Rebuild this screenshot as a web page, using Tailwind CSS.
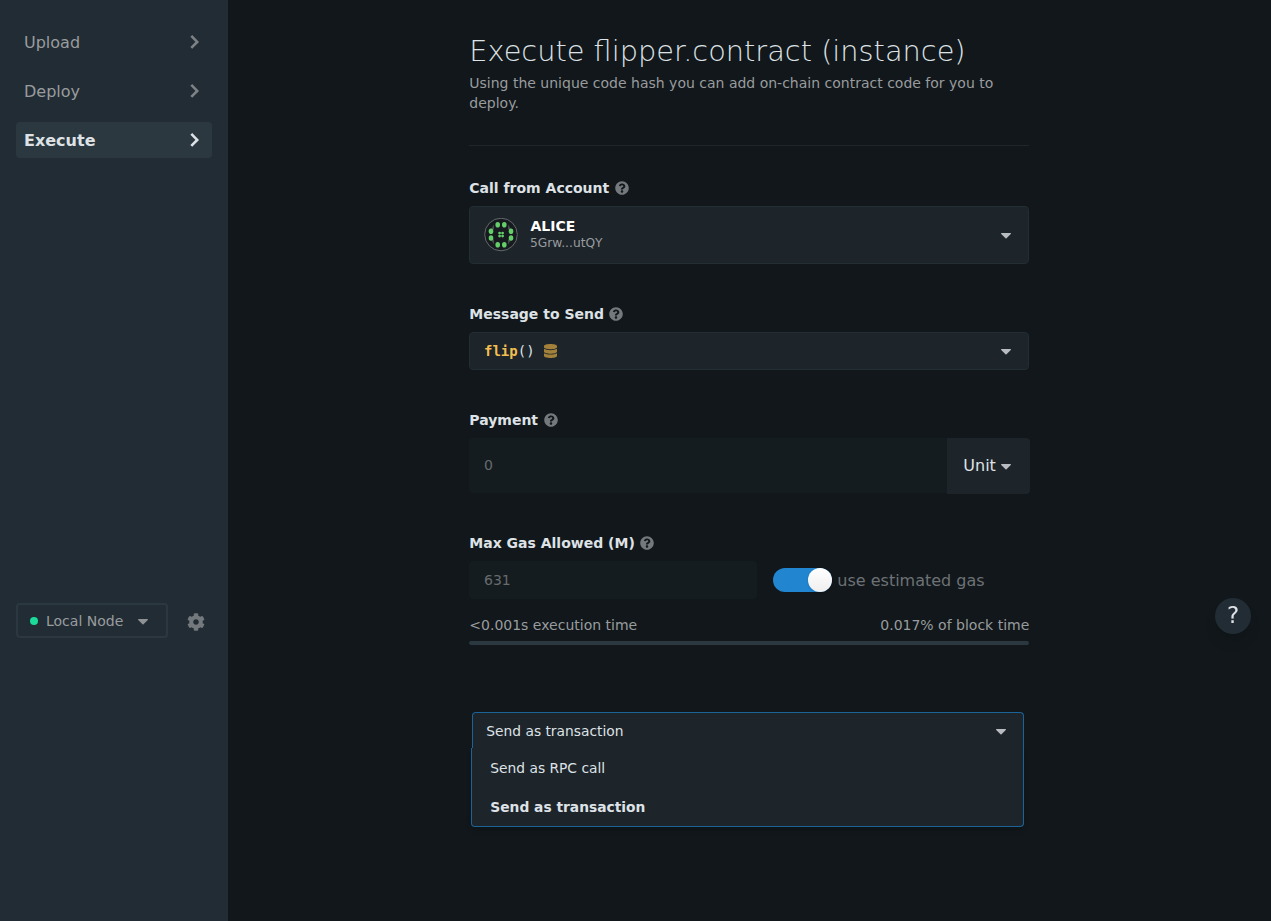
<!DOCTYPE html>
<html lang="en">
<head>
<meta charset="utf-8">
<title>Execute contract</title>
<script src="https://cdn.jsdelivr.net/npm/@tailwindcss/browser@4"></script>
</head>
<body class="flex h-[921px] overflow-hidden bg-[#11171a] font-['DejaVu_Sans',sans-serif] text-[#dee2e6]">
<svg class="hidden">
  <symbol id="help" viewBox="0 0 512 512"><path d="M504 256c0 136.997-111.043 248-248 248S8 392.997 8 256C8 119.083 119.043 8 256 8s248 111.083 248 248zM262.655 90c-54.497 0-89.255 22.957-116.549 63.758-3.536 5.286-2.353 12.415 2.715 16.258l34.699 26.31c5.205 3.947 12.621 3.008 16.665-2.122 17.864-22.658 30.113-35.797 57.303-35.797 20.429 0 45.698 13.148 45.698 32.958 0 14.976-12.363 22.667-32.534 33.976C247.128 238.528 216 254.941 216 296v4c0 6.627 5.373 12 12 12h56c6.627 0 12-5.373 12-12v-1.333c0-28.462 83.186-29.647 83.186-106.667 0-58.002-60.165-102-116.531-102zM256 338c-25.365 0-46 20.635-46 46 0 25.364 20.635 46 46 46s46-20.636 46-46c0-25.365-20.635-46-46-46z"/></symbol>
  <symbol id="caret" viewBox="0 0 10 6"><path d="M.6 0h8.8c.5 0 .8.6.4 1L5.5 5.3c-.3.3-.7.3-1 0L.2 1C-.2.6.1 0 .6 0z"/></symbol>
  <symbol id="chev" viewBox="0 0 10 14"><path d="M1.300 .9 7.200 6.900l-5.900 6" fill="none" stroke="currentColor" stroke-width="2.600"/></symbol>
</svg>
<aside class="flex w-[228px] shrink-0 flex-col bg-[#222c34] px-4 pt-6 text-[#999c9f]">
  <nav class="flex flex-col gap-[13px] text-base">
    <a class="flex h-9 items-center justify-between rounded px-2"><span class="pt-0.5">Upload</span><svg class="mr-1 h-3.5 w-2.5 text-[#7d8286]"><use href="#chev"/></svg></a>
    <a class="flex h-9 items-center justify-between rounded px-2"><span class="pt-0.5">Deploy</span><svg class="mr-1 h-3.5 w-2.5 text-[#7d8286]"><use href="#chev"/></svg></a>
    <a class="flex h-9 items-center justify-between rounded bg-[#2b383f] px-2 font-bold text-[#dee2e6]"><span class="pt-0.5">Execute</span><svg class="mr-1 h-3.5 w-2.5"><use href="#chev"/></svg></a>
  </nav>
  <div class="mt-[445px] flex items-center">
    <div class="flex h-[35px] w-[152px] items-center rounded border-2 border-[#2b383f] pl-3 text-sm"><span class="mr-2 size-2 rounded-full bg-[#1adb98]"></span>Local Node<svg class="ml-[15px] mt-0.5 h-1.5 w-2.5 fill-[#8f9295]"><use href="#caret"/></svg></div>
    <svg class="ml-[19px] mt-[2px] h-[18px] w-[18px] fill-[#74797d]" viewBox="0 0 512 512"><path d="M487.4 315.7l-42.6-24.6c4.3-23.2 4.3-47 0-70.2l42.6-24.6c4.9-2.8 7.1-8.6 5.5-14-11.1-35.6-30-67.8-54.7-94.6-3.8-4.1-10-5.1-14.8-2.3L380.8 110c-17.9-15.4-38.5-27.3-60.8-35.1V25.8c0-5.6-3.9-10.5-9.4-11.7-36.7-8.2-74.3-7.8-109.2 0-5.5 1.2-9.4 6.1-9.4 11.7V75c-22.2 7.9-42.8 19.8-60.8 35.1L88.7 85.5c-4.9-2.8-11-1.9-14.8 2.3-24.7 26.7-43.6 58.9-54.7 94.6-1.7 5.4.6 11.2 5.5 14L67.3 221c-4.3 23.2-4.3 47 0 70.2l-42.6 24.6c-4.9 2.8-7.1 8.6-5.5 14 11.1 35.6 30 67.8 54.7 94.6 3.8 4.1 10 5.1 14.8 2.3l42.6-24.6c17.9 15.4 38.5 27.3 60.8 35.1v49.2c0 5.6 3.9 10.5 9.4 11.7 36.7 8.2 74.3 7.8 109.2 0 5.5-1.2 9.4-6.1 9.4-11.7v-49.2c22.2-7.9 42.8-19.8 60.8-35.1l42.6 24.6c4.9 2.8 11 1.9 14.8-2.3 24.7-26.7 43.6-58.9 54.7-94.6 1.5-5.5-.7-11.3-5.6-14.1zM256 336c-44.1 0-80-35.9-80-80s35.9-80 80-80 80 35.9 80 80-35.9 80-80 80z"/></svg>
  </div>
</aside>
<main class="ml-[241.300px] w-[560px] shrink-0 text-sm">
  <header class="h-[146px] border-b border-[#1f272c] pt-[33px]">
    <h1 class="whitespace-nowrap text-[28.800px] font-extralight leading-9">Execute flipper.contract (instance)</h1>
    <p class="mt-1 leading-5 text-[#999c9f]">Using the unique code hash you can add on-chain contract code for you to deploy.</p>
  </header>
  <section class="pt-8">
    <h2 class="flex h-5 items-center font-bold">Call from Account<svg class="ml-[5.500px] size-3.5 fill-[#74797d]"><use href="#help"/></svg></h2>
    <div class="mt-2 flex h-[58px] items-center rounded border border-[#222d34] bg-[#1d242a] pl-[14.200px] pr-[17.500px]">
      <svg class="-mt-px size-[34px]" viewBox="0 0 34 34"><g transform="translate(0 -.5)"><circle cx="17" cy="17" r="16.300" fill="#171b1f" stroke="#6b7073" stroke-width=".9"/><g fill="#444b4b"><path d="M10 7v5l-4 1zM24 7v5l4 1zM10 27v-5l-4-1zM24 27v-5l4-1z"/></g><g fill="#64cf69"><ellipse cx="13.700" cy="7.200" rx="2.300" ry="2.800"/><ellipse cx="20.300" cy="7.200" rx="2.300" ry="2.800"/><ellipse cx="7" cy="13.800" rx="2.300" ry="2.800"/><ellipse cx="27" cy="13.800" rx="2.300" ry="2.800"/><ellipse cx="7" cy="20.500" rx="2.300" ry="2.800"/><ellipse cx="27" cy="20.500" rx="2.300" ry="2.800"/><ellipse cx="13.700" cy="27.200" rx="2.300" ry="2.800"/><ellipse cx="20.300" cy="27.200" rx="2.300" ry="2.800"/><circle cx="15.600" cy="15.600" r="1.400"/><circle cx="18.600" cy="15.600" r="1.400"/><circle cx="15.600" cy="18.600" r="1.400"/><circle cx="18.600" cy="18.600" r="1.400"/></g></g></svg>
      <div class="-mt-px ml-3 grow"><div class="font-bold leading-4 text-white">ALICE</div><div class="-ml-[0.500px] pt-px text-[12.250px] leading-4 text-[#999c9f]">5Grw...utQY</div></div>
      <svg class="mt-0.5 h-1.5 w-2.5 fill-[#b8bbbf]"><use href="#caret"/></svg>
    </div>
  </section>
  <section class="pt-10">
    <h2 class="flex h-5 items-center font-bold">Message to Send<svg class="ml-[5.500px] size-3.5 fill-[#74797d]"><use href="#help"/></svg></h2>
    <div class="mt-2 flex h-[38px] items-center rounded border border-[#222d34] bg-[#1d242a] pl-[13.700px] pr-[17.500px]">
      <div class="font-['DejaVu_Sans_Mono',monospace]"><span class="font-bold text-[#f3bf4f]">flip</span>()</div>
      <svg class="ml-[9.700px] h-3.5 w-[13px] fill-[#a3813a]" viewBox="0 0 448 512" preserveAspectRatio="none"><path d="M448 73.143v45.714C448 159.143 347.667 192 224 192S0 159.143 0 118.857V73.143C0 32.857 100.333 0 224 0s224 32.857 224 73.143zM448 176v102.857C448 319.143 347.667 352 224 352S0 319.143 0 278.857V176c48.125 33.143 136.208 48.572 224 48.572S399.874 209.143 448 176zm0 160v102.857C448 479.143 347.667 512 224 512S0 479.143 0 438.857V336c48.125 33.143 136.208 48.572 224 48.572S399.874 369.143 448 336z"/></svg>
      <svg class="ml-auto mt-0.5 h-1.5 w-2.5 fill-[#b8bbbf]"><use href="#caret"/></svg>
    </div>
  </section>
  <section class="pt-10">
    <h2 class="flex h-5 items-center font-bold">Payment<svg class="ml-[5.500px] size-3.5 fill-[#74797d]"><use href="#help"/></svg></h2>
    <div class="-mr-px mt-2 flex h-14">
      <div class="flex h-[55px] grow items-center rounded-l bg-[#151c1f] pb-px pl-[14.700px] text-[#666b6e]">0</div>
      <div class="flex w-[83px] items-center rounded-r bg-[#1d242a] pl-4 text-base"><span class="-mt-px">Unit</span><svg class="ml-[5.500px] mt-0.5 h-1.5 w-2.5 fill-[#b8bbbf]"><use href="#caret"/></svg></div>
    </div>
  </section>
  <section class="pt-[39px]">
    <h2 class="flex h-5 items-center font-bold">Max Gas Allowed (M)<svg class="ml-[5px] size-3.5 fill-[#74797d]"><use href="#help"/></svg></h2>
    <div class="mt-2 flex h-[38px] items-center">
      <div class="flex h-full w-72 items-center rounded bg-[#151c1f] pl-[14.700px] text-[#666b6e]">631</div>
      <div class="ml-4 flex h-6 w-[59px] justify-end rounded-full bg-[#2185d0]"><span class="size-6 rounded-full bg-linear-to-b from-white to-[#efefef] shadow"></span></div>
      <span class="ml-[5px] pt-0.5 text-base text-[#6d7276]">use estimated gas</span>
    </div>
    <div class="mt-4 flex justify-between leading-5 text-[#999c9f]"><span>&lt;0.001s execution time</span><span>0.017% of block time</span></div>
    <div class="mt-1.5 h-1 rounded-full bg-[#2b383f]"></div>
  </section>
  <section class="ml-0.5 mt-[67px] w-[553px] text-[13.800px]">
    <div class="ml-px flex h-9 items-center justify-between rounded-t border border-b-0 border-[#1b6399] bg-[#1d242a] pl-[13px] pr-[17px]"><span class="pt-0.5">Send as transaction</span><svg class="mt-[3px] h-1.5 w-2.5 fill-[#b8bbbf]"><use href="#caret"/></svg></div>
    <div class="h-[79px] rounded-b border border-t-0 border-[#1b6399] bg-[#1d242a] pl-[18px] shadow-md">
      <div class="flex h-10 items-center pt-0.5">Send as RPC call</div>
      <div class="flex h-[38px] items-center pt-px font-bold">Send as transaction</div>
    </div>
  </section>
</main>
<button class="fixed left-[1215px] top-[598px] flex size-9 items-center justify-center rounded-full bg-[#222c34] pb-px text-[23px] shadow-lg">?</button>
</body>
</html>
